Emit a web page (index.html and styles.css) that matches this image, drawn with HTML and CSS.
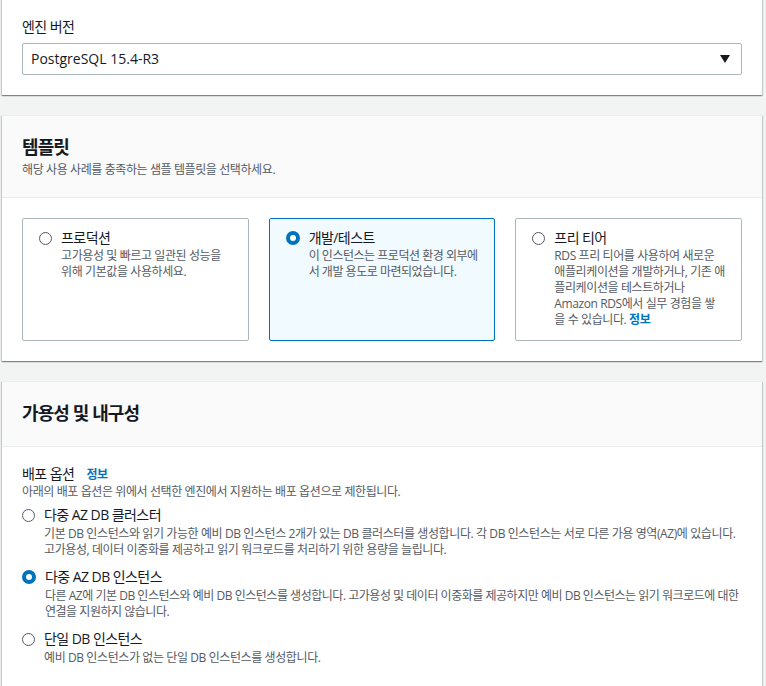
FILE: index.html
```html
<!DOCTYPE html>
<html lang="ko">
<head>
<meta charset="utf-8">
<link rel="stylesheet" href="styles.css">
</head>
<body>
<div class="page">
  <section class="panel panel-first">
    <div class="body body-first">
      <div class="field-label">엔진 버전</div>
      <div class="select">
        <span>PostgreSQL 15.4-R3</span>
        <span class="caret"></span>
      </div>
    </div>
  </section>

  <section class="panel">
    <header class="head">
      <h2 class="title">템플릿</h2>
      <p class="subtitle">해당 사용 사례를 충족하는 샘플 템플릿을 선택하세요.</p>
    </header>
    <div class="body body-cards">
      <div class="cards">
        <div class="card">
          <span class="radio"></span>
          <div class="card-text">
            <div class="opt-title">프로덕션</div>
            <div class="opt-desc">고가용성 및 빠르고 일관된 성능을 위해 기본값을 사용하세요.</div>
          </div>
        </div>
        <div class="card selected">
          <span class="radio on"></span>
          <div class="card-text">
            <div class="opt-title">개발/테스트</div>
            <div class="opt-desc tight">이 인스턴스는 프로덕션 환경 외부에서 개발 용도로 마련되었습니다.</div>
          </div>
        </div>
        <div class="card">
          <span class="radio"></span>
          <div class="card-text">
            <div class="opt-title">프리 티어</div>
            <div class="opt-desc">RDS 프리 티어를 사용하여 새로운 애플리케이션을 개발하거나, 기존 애플리케이션을 테스트하거나 Amazon RDS에서 실무 경험을 쌓을 수 있습니다. <a class="info">정보</a></div>
          </div>
        </div>
      </div>
    </div>
  </section>

  <section class="panel">
    <header class="head head-single">
      <h2 class="title">가용성 및 내구성</h2>
    </header>
    <div class="body body-options">
      <div class="field-label">배포 옵션 <a class="info info-label">정보</a></div>
      <div class="field-desc">아래의 배포 옵션은 위에서 선택한 엔진에서 지원하는 배포 옵션으로 제한됩니다.</div>
      <div class="options">
        <div class="option">
          <span class="radio"></span>
          <div>
            <div class="opt-title">다중 AZ DB 클러스터</div>
            <div class="opt-desc">기본 DB 인스턴스와 읽기 가능한 예비 DB 인스턴스 2개가 있는 DB 클러스터를 생성합니다. 각 DB 인스턴스는 서로 다른 가용 영역(AZ)에 있습니다. 고가용성, 데이터 이중화를 제공하고 읽기 워크로드를 처리하기 위한 용량을 늘립니다.</div>
          </div>
        </div>
        <div class="option">
          <span class="radio on"></span>
          <div>
            <div class="opt-title">다중 AZ DB 인스턴스</div>
            <div class="opt-desc tight">다른 AZ에 기본 DB 인스턴스와 예비 DB 인스턴스를 생성합니다. 고가용성 및 데이터 이중화를 제공하지만 예비 DB 인스턴스는 읽기 워크로드에 대한 연결을 지원하지 않습니다.</div>
          </div>
        </div>
        <div class="option">
          <span class="radio"></span>
          <div>
            <div class="opt-title">단일 DB 인스턴스</div>
            <div class="opt-desc">예비 DB 인스턴스가 없는 단일 DB 인스턴스를 생성합니다.</div>
          </div>
        </div>
      </div>
    </div>
  </section>
</div>
</body>
</html>
```

FILE: styles.css
```css
* { box-sizing: border-box; }
html, body { margin: 0; padding: 0; }
body {
  background: #f2f3f3;
  font-family: "Open Sans", "Noto Sans CJK KR", sans-serif;
  color: #16191f;
  font-size: 14px;
  line-height: 20px;
  letter-spacing: -0.56px;
}
.page {
  padding: 0 4px 0 2px;
  display: flex;
  flex-direction: column;
  gap: 20px;
}
.panel {
  background: #fff;
  border-top: 1px solid #eaeded;
  box-shadow: 0 1px 1px 0 rgba(0, 28, 36, 0.3), 1px 1px 1px 0 rgba(0, 28, 36, 0.15), -1px 1px 1px 0 rgba(0, 28, 36, 0.15);
}
.panel-first { border-top: 0; margin-top: -1px; }
.body { padding: 0 20px 20px 20px; }
.body-first { padding-top: 18px; }
.field-label { font-size: 14px; line-height: 20px; color: #16191f; }
.field-desc, .subtitle, .opt-desc, .info { letter-spacing: -0.4px; }
.opt-desc.tight { letter-spacing: -0.48px; }
.field-desc { font-size: 12px; line-height: 16px; color: #545b64; }
.select {
  margin-top: 6px;
  height: 32px;
  border: 1px solid #aab7b8;
  border-radius: 2px;
  display: flex;
  align-items: center;
  justify-content: space-between;
  padding: 0 11px 0 8px;
  letter-spacing: 0;
}
.caret {
  width: 0; height: 0;
  border-left: 5px solid transparent;
  border-right: 5px solid transparent;
  border-top: 8px solid #16191f;
}
.head {
  background: #fafafa;
  border-bottom: 1px solid #eaeded;
  padding: 20px 20px 19px 20px;
}
.head-single { padding: 19px 20px 21px 20px; }
.title {
  margin: 0;
  font-size: 18px;
  line-height: 22px;
  font-weight: 700;
  letter-spacing: -0.9px;
}
.head-single .title { line-height: 24px; }
.subtitle {
  margin: 4px 0 0 0;
  font-size: 12px;
  line-height: 16px;
  color: #545b64;
}
.body-cards { padding-top: 20px; }
.cards {
  display: grid;
  grid-template-columns: repeat(3, 1fr);
  gap: 20px;
}
.card {
  height: 123px;
  border: 1px solid #aab7b8;
  border-radius: 2px;
  padding: 9px 16px;
  display: flex;
  align-items: flex-start;
  gap: 9px;
}
.card.selected {
  background: #f1faff;
  border-color: #0073bb;
}
.radio {
  flex: none;
  width: 13px;
  height: 13px;
  margin-top: 4px;
  border-radius: 50%;
  border: 1.5px solid #545b64;
  background: #fff;
}
.radio.on { border: 4px solid #0073bb; width: 14px; height: 14px; margin-top: 3px; }
.opt-title { font-size: 14px; line-height: 20px; color: #16191f; }
.opt-desc { font-size: 12px; line-height: 16px; color: #545b64; }
.info { color: #0073bb; font-weight: 700; font-size: 12px; line-height: 16px; text-decoration: none; }
.info-label { margin-left: 9px; }
.body-options { padding-top: 17px; }
.options {
  margin-top: 5px;
  display: flex;
  flex-direction: column;
  gap: 9px;
}
.option {
  display: flex;
  align-items: flex-start;
  gap: 9px;
}
.option .opt-desc { margin-top: 1px; }
```
